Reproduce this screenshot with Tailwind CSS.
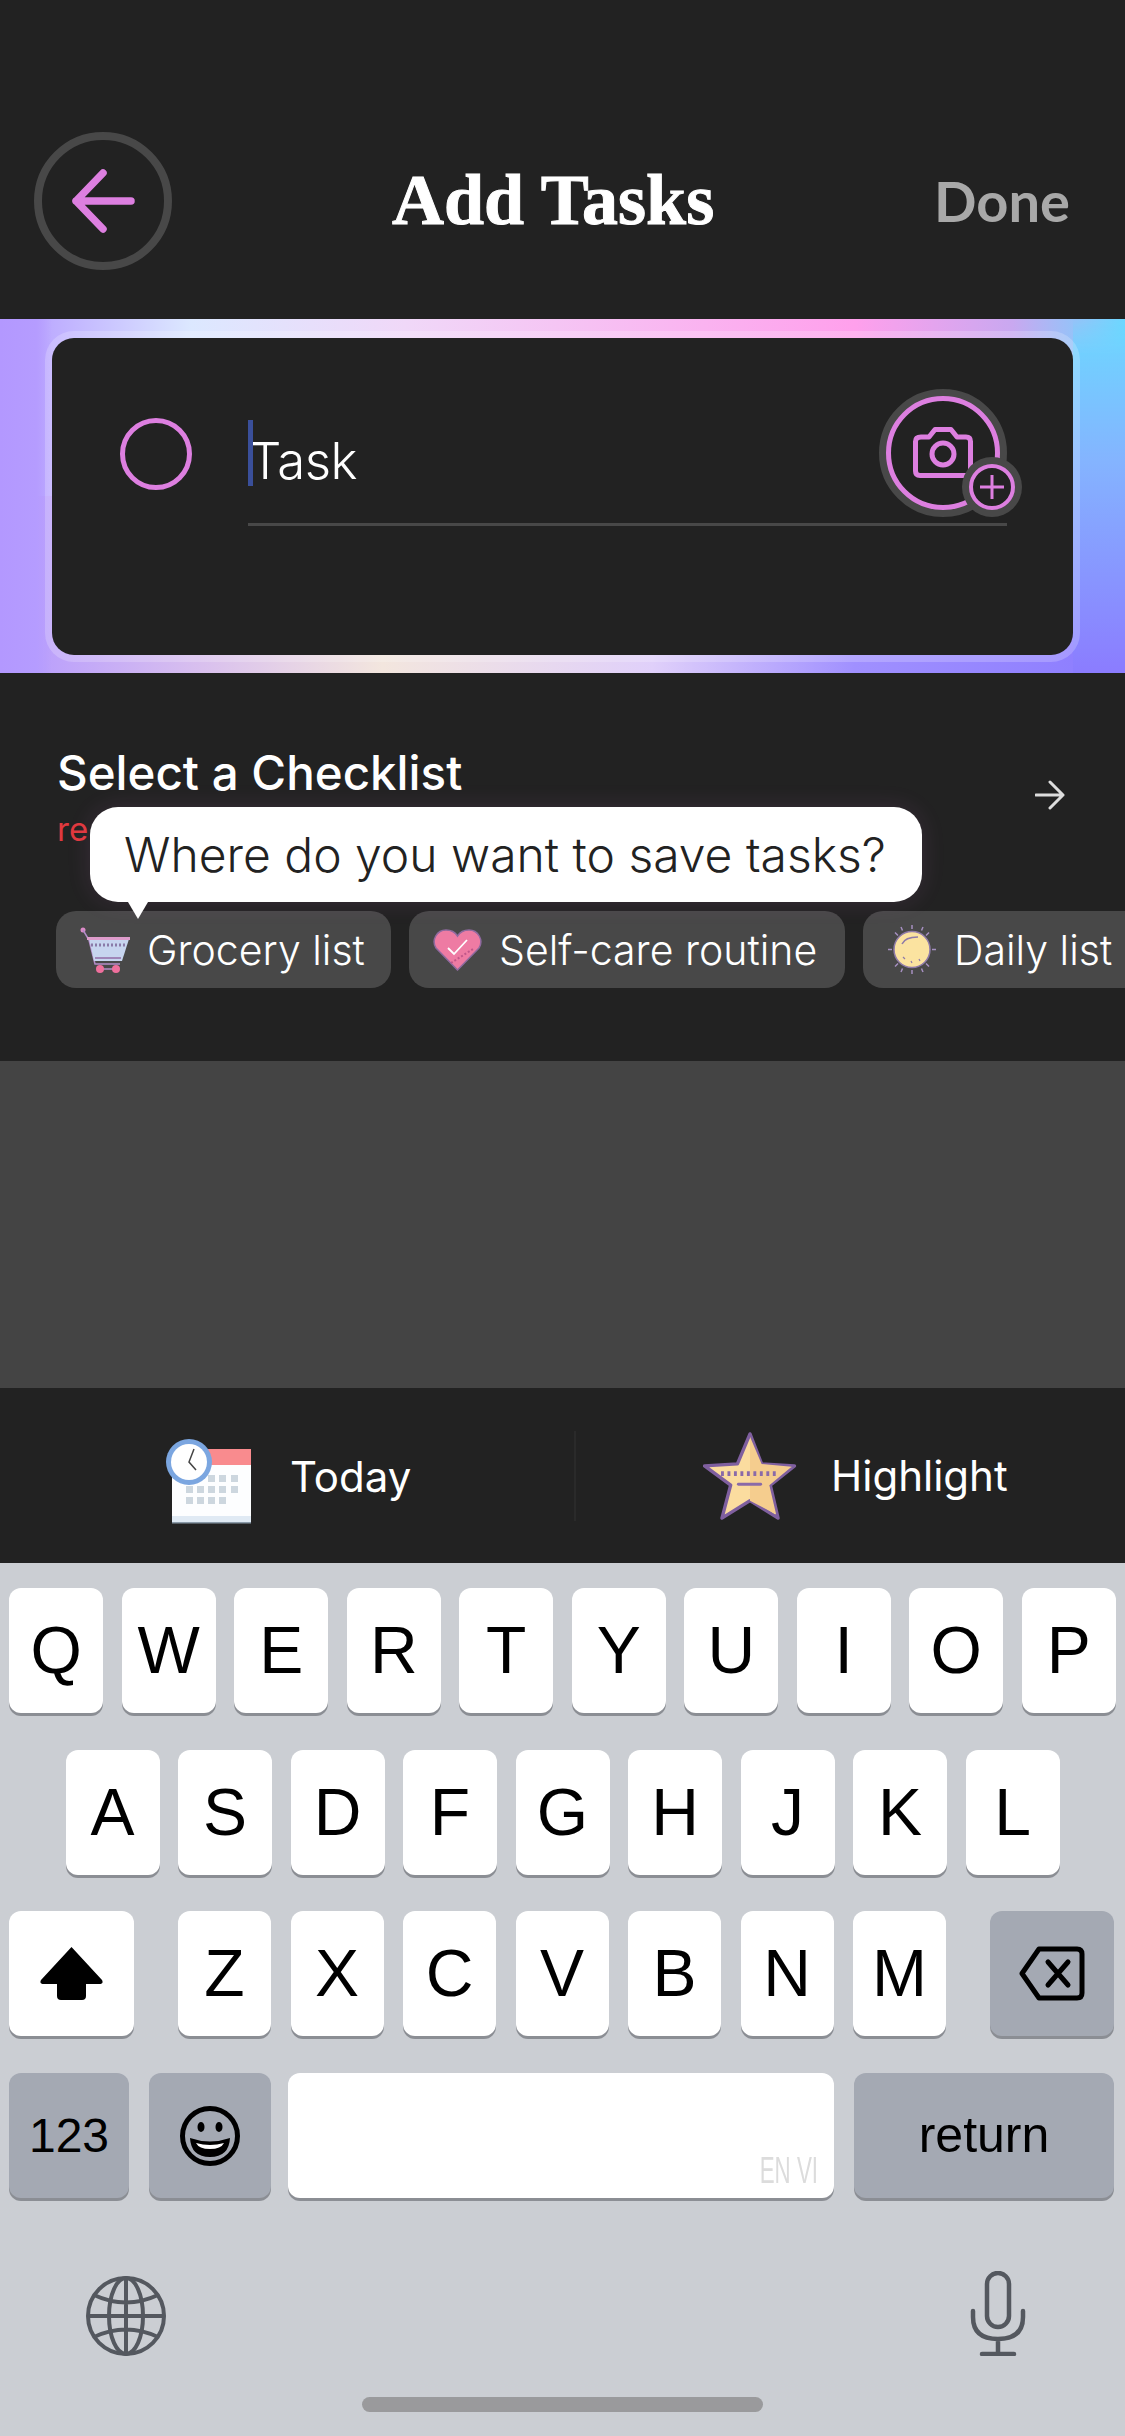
<!DOCTYPE html>
<html lang="en"><head><meta charset="utf-8"><title>Add Tasks</title>
<script src="https://cdn.jsdelivr.net/npm/@tailwindcss/browser@4"></script></head>
<body class="m-0">
<div class="w-[1125px] h-[2436px] flex flex-col overflow-hidden bg-[#222222] font-['Inter',sans-serif] text-white">
  <!-- header -->
  <header class="h-[319px] shrink-0 flex items-start justify-between pl-[34px] pr-[55px] pt-[132px]">
    <div class="w-[138px] h-[138px] rounded-full border-[8px] border-[#484848] flex items-center justify-center">
      <svg width="66" height="66" viewBox="0 0 66 66" fill="none" stroke="#dd7fe0" stroke-width="7.500" stroke-linecap="round" stroke-linejoin="round" class="-ml-[2px]"><path d="M7 33H62M34 5L7 33L34 61"/></svg>
    </div>
    <h1 class="font-['Liberation_Serif',serif] font-bold text-[72px] leading-[72px] mt-[32px] m-0 [-webkit-text-stroke:1px_white]">Add Tasks</h1>
    <div class="font-['Lato',sans-serif] text-[#a8a8a8] font-bold text-[56px] leading-[64px] mt-[37px]">Done</div>
  </header>

  <!-- gradient band -->
  <section class="relative h-[354px] shrink-0 pl-[52px] pr-[52px] pt-[19px] bg-[linear-gradient(90deg,#b398ff_0%,#dce8ff_17%,#f0d8f8_36%,#ffa0ec_76%,#c9a8f0_90%,#6cd8ff_100%)]">
    <div class="absolute inset-x-0 bottom-0 h-[177px] bg-[linear-gradient(90deg,#b398ff_0%,#d9c0ee_18%,#f3e6de_34%,#e0d0fa_58%,#a090ff_76%,#8b7cff_100%)]"></div>
    <div class="absolute left-0 inset-y-0 w-[52px] bg-[linear-gradient(90deg,#b398ff_0%,#b59cff_70%,rgba(190,170,255,0)_100%)]"></div>
    <div class="absolute right-0 inset-y-0 w-[52px] bg-[linear-gradient(180deg,#6cd8ff_0%,#84b4ff_40%,#8b7cff_100%)] [mask-image:linear-gradient(180deg,transparent,black_10%)]"></div>
    <div class="relative h-[317px] rounded-[22px] bg-[#222222] shadow-[0_0_0_7px_rgba(255,255,255,0.2)] flex items-start pl-[68px] pr-[66px] pt-[80px] gap-[56px]">
      <div class="w-[72px] h-[72px] rounded-full border-[5px] border-[#dd7fe0] shrink-0"></div>
      <div class="flex-1 h-[108px] border-b-[3px] border-[#484848] relative">
        <div class="absolute left-0 top-[2px] w-[5px] h-[66px] bg-[#3a4f9a]"></div>
        <div class="pl-[1px] pt-[11px] text-[51px] leading-[64px] font-light tracking-[-0.5px]">Task</div>
      </div>
      <svg class="absolute left-[827px] top-[51px]" width="150" height="135" viewBox="0 0 150 135" fill="none">
        <circle cx="64" cy="64" r="60" stroke="#484848" stroke-width="8"/>
        <circle cx="64" cy="64" r="54.500" stroke="#dd7fe0" stroke-width="5"/>
        <path d="M42 48H50L56 40.500H72L78 48H87Q91.500 48 91.500 52.500V82Q91.500 86.500 87 86.500H41Q36.500 86.500 36.500 82V52.500Q36.500 48 42 48Z" stroke="#dd7fe0" stroke-width="5" stroke-linejoin="round"/>
        <circle cx="64" cy="65" r="11" stroke="#dd7fe0" stroke-width="5"/>
        <circle cx="113" cy="98" r="30" fill="#484848"/>
        <circle cx="113" cy="98" r="21" fill="#222222" stroke="#dd7fe0" stroke-width="4"/>
        <path d="M101 98H125M113 86V110" stroke="#dd7fe0" stroke-width="3"/>
      </svg>
    </div>
  </section>

  <!-- checklist -->
  <section class="relative h-[388px] shrink-0 pt-[70px]">
    <div class="pl-[57px] flex justify-between pr-[60px]">
      <div>
        <div class="text-[47.500px] leading-[60px] font-medium">Select a Checklist</div>
        <div class="text-[#e0393e] text-[33px] leading-[40px] mt-[6px]">re</div>
      </div>
      <svg class="mt-[37px]" width="30" height="30" viewBox="0 0 30 30" fill="none" stroke="#dddddd" stroke-width="3" stroke-linecap="round" stroke-linejoin="round"><path d="M1 15H28M15 2L28 15L15 28"/></svg>
    </div>
    <div class="flex gap-[18px] pl-[56px] pt-[62px] whitespace-nowrap text-[41px] leading-[77px] font-light">
      <div class="h-[77px] w-[335px] shrink-0 rounded-[20px] bg-[#484848] flex items-center pl-[24px] gap-[16px]">
        <svg width="51" height="46" viewBox="0 0 51 46" fill="none">
          <circle cx="3" cy="3" r="2.500" fill="#dd8bc8"/>
          <path d="M3 3L9 13L15 37H40" stroke="#b48cc8" stroke-width="1.500"/>
          <path d="M9 12H49L42 34H14Z" fill="#c7d5ef"/>
          <path d="M7 11.500H50" stroke="#dd9ccb" stroke-width="3"/>
          <path d="M11 18H46" stroke="#8a7ba8" stroke-width="3" stroke-dasharray="2 2"/>
          <path d="M15 31H41" stroke="#9f86b8" stroke-width="2"/>
          <path d="M20 42H36" stroke="#b48cc8" stroke-width="1.500"/>
          <circle cx="20" cy="42" r="4" fill="#ee6f9c"/><circle cx="36" cy="42" r="4" fill="#ee6f9c"/>
        </svg>
        <span class="pt-[2px]">Grocery list</span>
      </div>
      <div class="h-[77px] w-[436px] shrink-0 rounded-[20px] bg-[#484848] flex items-center pl-[24px] gap-[17px]">
        <svg width="49" height="42" viewBox="0 0 49 42" fill="none">
          <path d="M24.500 41L3 19C-2 11 4 1 13 1C18 1 22 3 24.500 7C27 3 31 1 36 1C45 1 51 11 46 19Z" fill="#ee7ba3" stroke="#8f6a9f" stroke-width="1.500"/>
          <path d="M15 19L21 25L34 11" stroke="#ffffff" stroke-width="1.800"/>
          <path d="M18 34L40 20" stroke="#c0578a" stroke-width="2" stroke-dasharray="2 2"/>
        </svg>
        <span class="pt-[2px]">Self-care routine</span>
      </div>
      <div class="h-[77px] w-[300px] shrink-0 rounded-[20px] bg-[#484848] flex items-center pl-[24px] gap-[17px]">
        <svg width="50" height="51" viewBox="0 0 50 51" fill="none">
          <path d="M25 1V5M25 46V50M1 25.500H5M45 25.500H49M8 8.500L11 11.500M39 39.500L42 42.500M42 8.500L39 11.500M11 39.500L8 42.500M14 3L15.500 6.500M36 3L34.500 6.500M14 48L15.500 44.500M36 48L34.500 44.500" stroke="#a58fc0" stroke-width="1.500"/>
          <circle cx="25" cy="25.500" r="18" fill="#fbe3a0" stroke="#8f7ba8" stroke-width="1.500"/>
          <path d="M15 20Q18 13 31 13" stroke="#8f7ba8" stroke-width="1.500"/>
          <path d="M16 33L18 35M24 37L25 39M32 35L33 37" stroke="#8f7ba8" stroke-width="1.200"/>
        </svg>
        <span class="pt-[2px]">Daily list</span>
      </div>
    </div>
    <!-- tooltip -->
    <div class="absolute left-[90px] top-[134px] w-[832px] h-[95px] rounded-[28px] bg-white shadow-[0_0_24px_rgba(221,127,224,0.12)] text-[#222222] text-[48px] leading-[95px] pl-[34px] whitespace-nowrap font-light">Where do you want to save tasks?</div>
    <div class="absolute left-[128px] top-[229px] w-0 h-0 border-l-[10px] border-r-[10px] border-t-[17px] border-l-transparent border-r-transparent border-t-white"></div>
  </section>

  <!-- empty gray -->
  <div class="h-[327px] shrink-0 bg-[#444444]"></div>

  <!-- toolbar -->
  <section class="h-[175px] shrink-0 bg-[#222222] flex items-center text-[42px] leading-[50px] font-normal">
    <div class="w-[574px] shrink-0 flex items-center pl-[165px]">
      <svg class="mt-[15px]" width="90" height="90" viewBox="0 0 90 90" fill="none">
        <rect x="7" y="11" width="79" height="74" fill="#fdfeff"/>
        <rect x="7" y="11" width="79" height="16" fill="#f98b8e"/>
        <rect x="7" y="78" width="79" height="6" fill="#e0eaf4"/>
        <rect x="7" y="84" width="79" height="1.500" fill="#8a9aa8"/>
        <g fill="#cdd7df">
          <rect x="43" y="37" width="7" height="7"/><rect x="54" y="37" width="7" height="7"/><rect x="66" y="37" width="7" height="7"/>
          <rect x="21" y="48" width="7" height="7"/><rect x="32" y="48" width="7" height="7"/><rect x="43" y="48" width="7" height="7"/><rect x="54" y="48" width="7" height="7"/><rect x="66" y="48" width="7" height="7"/>
          <rect x="21" y="59" width="7" height="7"/><rect x="32" y="59" width="7" height="7"/><rect x="43" y="59" width="7" height="7"/><rect x="54" y="59" width="7" height="7"/>
        </g>
        <circle cx="24" cy="24" r="23" fill="#7ba6e0"/><circle cx="24" cy="24" r="18" fill="#ffffff"/>
        <path d="M29 11L24 24L31 32" stroke="#444444" stroke-width="1.500"/>
      </svg>
      <span class="ml-[35px] pt-[2px]">Today</span>
    </div>
    <div class="w-[2px] h-[90px] bg-[#2a2a2a] shrink-0"></div>
    <div class="flex-1 flex items-center pl-[127px]">
      <svg width="94" height="88" viewBox="-1 -2 96 91" fill="none">
        <path d="M47 0L59 31L93 33L68 53L76 87L47 69L18 87L27 53L0 33L34 31Z" fill="#fbdc9f" stroke="#7f5f9f" stroke-width="3.500" stroke-linejoin="round"/>
        <path d="M47 3L59 31L90 34L67 53L74 83L47 69Z" fill="#f5cd8e"/>
        <path d="M17 41H77" stroke="#8a6aa8" stroke-width="5" stroke-dasharray="3 3.700"/>
        <path d="M35 52H58" stroke="#8a6aa8" stroke-width="3" stroke-linecap="round"/>
      </svg>
      <span class="ml-[34px]">Highlight</span>
    </div>
  </section>

  <!-- keyboard -->
  <section class="flex-1 bg-[#cbced3] pt-[25px] flex flex-col gap-[36.7px] font-['Liberation_Sans',sans-serif] text-black text-[66px]">
    <div class="flex justify-center gap-[18.5px]">
      <div class="w-[94px] h-[125px] rounded-[12px] bg-white shadow-[0_3px_0_#8b8e94] flex items-center justify-center">Q</div>
      <div class="w-[94px] h-[125px] rounded-[12px] bg-white shadow-[0_3px_0_#8b8e94] flex items-center justify-center">W</div>
      <div class="w-[94px] h-[125px] rounded-[12px] bg-white shadow-[0_3px_0_#8b8e94] flex items-center justify-center">E</div>
      <div class="w-[94px] h-[125px] rounded-[12px] bg-white shadow-[0_3px_0_#8b8e94] flex items-center justify-center">R</div>
      <div class="w-[94px] h-[125px] rounded-[12px] bg-white shadow-[0_3px_0_#8b8e94] flex items-center justify-center">T</div>
      <div class="w-[94px] h-[125px] rounded-[12px] bg-white shadow-[0_3px_0_#8b8e94] flex items-center justify-center">Y</div>
      <div class="w-[94px] h-[125px] rounded-[12px] bg-white shadow-[0_3px_0_#8b8e94] flex items-center justify-center">U</div>
      <div class="w-[94px] h-[125px] rounded-[12px] bg-white shadow-[0_3px_0_#8b8e94] flex items-center justify-center">I</div>
      <div class="w-[94px] h-[125px] rounded-[12px] bg-white shadow-[0_3px_0_#8b8e94] flex items-center justify-center">O</div>
      <div class="w-[94px] h-[125px] rounded-[12px] bg-white shadow-[0_3px_0_#8b8e94] flex items-center justify-center">P</div>
    </div>
    <div class="flex justify-center gap-[18.5px]">
      <div class="w-[94px] h-[125px] rounded-[12px] bg-white shadow-[0_3px_0_#8b8e94] flex items-center justify-center">A</div>
      <div class="w-[94px] h-[125px] rounded-[12px] bg-white shadow-[0_3px_0_#8b8e94] flex items-center justify-center">S</div>
      <div class="w-[94px] h-[125px] rounded-[12px] bg-white shadow-[0_3px_0_#8b8e94] flex items-center justify-center">D</div>
      <div class="w-[94px] h-[125px] rounded-[12px] bg-white shadow-[0_3px_0_#8b8e94] flex items-center justify-center">F</div>
      <div class="w-[94px] h-[125px] rounded-[12px] bg-white shadow-[0_3px_0_#8b8e94] flex items-center justify-center">G</div>
      <div class="w-[94px] h-[125px] rounded-[12px] bg-white shadow-[0_3px_0_#8b8e94] flex items-center justify-center">H</div>
      <div class="w-[94px] h-[125px] rounded-[12px] bg-white shadow-[0_3px_0_#8b8e94] flex items-center justify-center">J</div>
      <div class="w-[94px] h-[125px] rounded-[12px] bg-white shadow-[0_3px_0_#8b8e94] flex items-center justify-center">K</div>
      <div class="w-[94px] h-[125px] rounded-[12px] bg-white shadow-[0_3px_0_#8b8e94] flex items-center justify-center">L</div>
    </div>
    <div class="flex pl-[9px]">
      <div class="w-[125px] h-[125px] rounded-[12px] bg-white shadow-[0_3px_0_#8b8e94] flex items-center justify-center">
        <svg width="63" height="53" viewBox="0 0 63 53" fill="#000000"><path d="M31.500 0L62 33Q64 37 59 37H46V49Q46 53 42 53H21Q17 53 17 49V37H4Q-1 37 1 33Z"/></svg>
      </div>
      <div class="ml-[44px] flex gap-[19.5px]">
        <div class="w-[93px] h-[125px] rounded-[12px] bg-white shadow-[0_3px_0_#8b8e94] flex items-center justify-center">Z</div>
        <div class="w-[93px] h-[125px] rounded-[12px] bg-white shadow-[0_3px_0_#8b8e94] flex items-center justify-center">X</div>
        <div class="w-[93px] h-[125px] rounded-[12px] bg-white shadow-[0_3px_0_#8b8e94] flex items-center justify-center">C</div>
        <div class="w-[93px] h-[125px] rounded-[12px] bg-white shadow-[0_3px_0_#8b8e94] flex items-center justify-center">V</div>
        <div class="w-[93px] h-[125px] rounded-[12px] bg-white shadow-[0_3px_0_#8b8e94] flex items-center justify-center">B</div>
        <div class="w-[93px] h-[125px] rounded-[12px] bg-white shadow-[0_3px_0_#8b8e94] flex items-center justify-center">N</div>
        <div class="w-[93px] h-[125px] rounded-[12px] bg-white shadow-[0_3px_0_#8b8e94] flex items-center justify-center">M</div>
      </div>
      <div class="ml-[44px] w-[124px] h-[125px] rounded-[12px] bg-[#a4a9b3] shadow-[0_3px_0_#8b8e94] flex items-center justify-center">
        <svg width="66" height="55" viewBox="0 0 66 55" fill="none" stroke="#000000" stroke-width="5" stroke-linejoin="round" stroke-linecap="round"><path d="M20 3H58Q63 3 63 8V47Q63 52 58 52H20L3 27.500Z"/><path d="M29 16L49 39M49 16L29 39"/></svg>
      </div>
    </div>
    <div class="flex pl-[9px] text-[48px]">
      <div class="w-[120px] h-[125px] rounded-[12px] bg-[#a4a9b3] shadow-[0_3px_0_#8b8e94] flex items-center justify-center">123</div>
      <div class="ml-[20px] w-[122px] h-[125px] rounded-[12px] bg-[#a4a9b3] shadow-[0_3px_0_#8b8e94] flex items-center justify-center">
        <svg width="62" height="62" viewBox="0 0 62 62" fill="none"><circle cx="31" cy="31" r="27.500" stroke="#000000" stroke-width="5"/><ellipse cx="22" cy="22" rx="3.500" ry="5" fill="#000000"/><ellipse cx="40" cy="22" rx="3.500" ry="5" fill="#000000"/><path d="M11 33Q31 40 51 33Q50 52 31 52Q12 52 11 33Z" fill="#000000"/><path d="M17 38Q31 42 45 38Q42 44 31 44Q20 44 17 38Z" fill="#ffffff"/></svg>
      </div>
      <div class="ml-[17px] w-[546px] h-[125px] rounded-[12px] bg-white shadow-[0_3px_0_#8b8e94] flex items-end justify-end pr-[16px] pb-[12px]">
        <span class="font-['Liberation_Sans_Narrow','Liberation_Sans',sans-serif] text-[#dcdcdc] text-[36px] leading-[30px] scale-x-[0.62] origin-right">EN VI</span>
      </div>
      <div class="ml-[20px] w-[260px] h-[125px] rounded-[12px] bg-[#a4a9b3] shadow-[0_3px_0_#8b8e94] flex items-center justify-center text-[50px]">return</div>
    </div>
    <div class="flex justify-between items-start pl-[86px] pr-[99px] mt-[41px]">
      <svg width="80" height="80" viewBox="0 0 80 80" fill="none" stroke="#54585f" stroke-width="4"><circle cx="40" cy="40" r="38"/><ellipse cx="40" cy="40" rx="17" ry="38"/><path d="M40 2V78M2 40H78M8 19Q40 34 72 19M8 61Q40 46 72 61"/></svg>
      <svg class="-mt-[5px]" width="56" height="85" viewBox="0 0 56 85" fill="none" stroke="#54585f" stroke-width="4.500" stroke-linecap="round"><rect x="17" y="2" width="22" height="54" rx="11"/><path d="M3 40V46Q3 68 28 68Q53 68 53 46V40M28 68V83M12 83H44"/></svg>
    </div>
    <div class="mt-[5px] mx-[362px] h-[15px] rounded-full bg-[#9a9a9c] shrink-0"></div>
  </section>
</div>
</body></html>
